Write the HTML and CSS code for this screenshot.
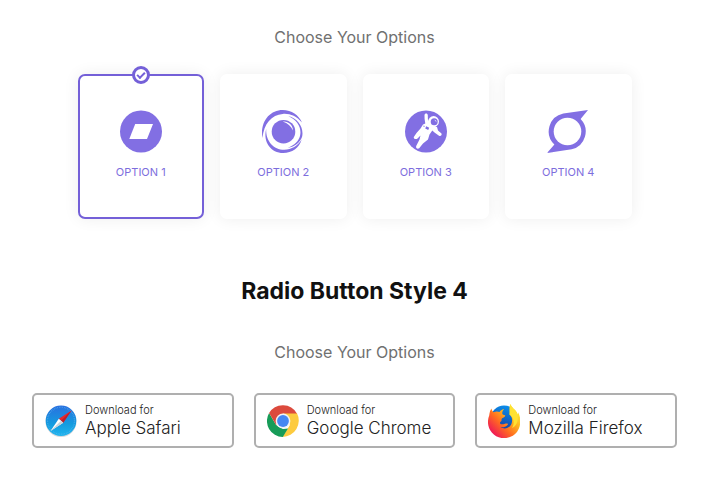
FILE: index.html
```
<!DOCTYPE html>
<html lang="en">
<head>
    <meta charset="UTF-8">
    <meta name="viewport" content="width=device-width, initial-scale=1.0">
    <title>Radio Button Styles</title>
    <link rel="stylesheet" href="styles.css">
</head>
<body>
    <section class="style-block">
        <p class="subtitle" id="cards-label">Choose Your Options</p>
        <div class="cards" role="radiogroup" aria-labelledby="cards-label">
            <label class="card">
                <input class="card-radio" type="radio" name="option" value="1" checked>
                <svg class="card-icon" viewBox="0 0 42 43" aria-hidden="true">
                    <circle cx="21" cy="21.5" r="21"/>
                    <path class="cut" d="M15.2 14H33l-6 15H9.3z"/>
                </svg>
                <span>OPTION 1</span>
            </label>
            <label class="card">
                <input class="card-radio" type="radio" name="option" value="2">
                <svg class="card-icon" viewBox="0 0 42 43" aria-hidden="true">
                    <circle cx="21.5" cy="21.7" r="11.8"/>
                    <path class="cut" d="M20.700 11.600C26.200 11 30.700 14.800 31 20.500C29 16.200 25.700 13.300 20.700 11.600z"/>
                    <path d="M.5 28C-2.300 12 7.700 0 20.700 0C29.700 0 36.700 5 40 12.600C34.200 5.800 27.700 3.300 20.700 3.900C9.700 4.800 1.800 13.500.5 28z"/>
                    <path d="M4.200 19C3.500 31 11.700 39.800 22.200 39.800C29.700 39.800 35.700 35.500 39.700 29.500C37.200 38 30 43 21.200 43C9.200 43 .7 32.500 4.200 19z"/>
                    <path d="M26.200 6C36.200 8.500 42.300 18 40 27C38 32.500 33.200 36.500 25.700 38C32.700 35 36.700 31 38 26C40 17.500 35.200 10 26.200 6z"/>
                </svg>
                <span>OPTION 2</span>
            </label>
            <label class="card">
                <input class="card-radio" type="radio" name="option" value="3">
                <svg class="card-icon" viewBox="0 0 42 43" aria-hidden="true">
                    <circle cx="21" cy="21.5" r="21"/>
                    <path class="cut" d="M19.500 5.200C19.500 3.200 22.700 3 22.800 5.200L22.900 9.500L25.500 14L32 17L33 20.500L36.500 23.500C37.200 25.500 35.500 26.500 34 25.800L29.500 22.500L27.300 20.500L24.500 24.500L23 29.500L18 33.500L14.200 38.200C12.500 39.500 10.500 38 11.200 36L14.500 29.500L15.500 25.500L12.500 28.500C10.800 29.800 8.300 28.800 8.800 27L11.500 23L15.500 18.500L18 14.500L20.300 13.500L19.600 9z"/>
                    <circle class="cut" cx="28.600" cy="11.500" r="5.400"/>
                    <circle cx="29.200" cy="11.800" r="3.500"/>
                    <path class="cut" d="M29 9.700c1.700.1 2.500 1.200 2.400 2.700c-.5-1.100-1.200-1.900-2.400-2.700z"/>
                    <path d="M21.200 16.300l3 1.500l-1 2.200l-3-1.500zM18.700 15.500l1 .5l-.4 1l-1-.5z"/>
                </svg>
                <span>OPTION 3</span>
            </label>
            <label class="card">
                <input class="card-radio" type="radio" name="option" value="4">
                <svg class="card-icon" viewBox="0 0 42 43" aria-hidden="true">
                    <path d="M41 0L33.600 9A18.200 18.200 0 0 1 24.700 39.300L0 43L7.400 34.500A18.200 18.200 0 0 1 16.300 3.500z"/>
                    <circle class="cut" cx="20.500" cy="21.500" r="13.800"/>
                </svg>
                <span>OPTION 4</span>
            </label>
        </div>
    </section>

    <section class="style-block">
        <h2>Radio Button Style 4</h2>
        <p class="subtitle" id="downloads-label">Choose Your Options</p>
        <div class="downloads" role="radiogroup" aria-labelledby="downloads-label">
            <label class="download">
                <input class="download-radio" type="radio" name="browser" value="safari">
                <svg class="download-icon" viewBox="0 0 32 34" aria-hidden="true">
                    <defs>
                        <linearGradient id="safari-blue" x1="0" y1="0" x2="0" y2="1">
                            <stop offset="0" stop-color="#2a6fe0"/>
                            <stop offset=".6" stop-color="#149bdf"/>
                            <stop offset="1" stop-color="#1fb5ee"/>
                        </linearGradient>
                    </defs>
                    <circle cx="16" cy="17.500" r="15.500" fill="#d3d7dc"/>
                    <circle cx="16" cy="16.700" r="15.300" fill="url(#safari-blue)"/>
                    <circle cx="16" cy="16.700" r="13.500" fill="none" stroke="#5fb4ee" stroke-width="1.200" stroke-dasharray=".5 1.200"/>
                    <path d="M26.500 6.500L18.200 18.700L13.800 14.800z" fill="#e9272c"/>
                    <path d="M26.500 6.500L18.200 18.700L16 16.700z" fill="#b91f2c"/>
                    <path d="M13.800 14.800L18.200 18.700L5.500 27z" fill="#fff"/>
                    <path d="M16 16.700L18.200 18.700L5.500 27z" fill="#c8d2d8"/>
                </svg>
                <span class="download-text">
                    <small>Download for</small>
                    <span>Apple Safari</span>
                </span>
            </label>
            <label class="download">
                <input class="download-radio" type="radio" name="browser" value="chrome">
                <svg class="download-icon" viewBox="0 0 32 34" aria-hidden="true">
                    <path d="M16 9H29.900A16.400 16.400 0 0 1 15.500 33L22.900 21z" fill="#fdcb3f"/>
                    <path d="M2.100 9L9.100 21L16 25L21 24.500L15.800 33A16 16 0 0 1 2.100 9z" fill="#179c58"/>
                    <path d="M2.100 9A16 16 0 0 1 29.900 9.500H16L9.100 21z" fill="#dc4a3d"/>
                    <circle cx="16" cy="17" r="7.400" fill="#f3f3f3"/>
                    <circle cx="16" cy="17" r="5.900" fill="#4587f3"/>
                </svg>
                <span class="download-text">
                    <small>Download for</small>
                    <span>Google Chrome</span>
                </span>
            </label>
            <label class="download">
                <input class="download-radio" type="radio" name="browser" value="firefox">
                <svg class="download-icon" viewBox="0 0 32 34" aria-hidden="true">
                    <defs>
                        <linearGradient id="fox-body" x1=".9" y1=".1" x2=".15" y2=".85">
                            <stop offset="0" stop-color="#fff23a"/>
                            <stop offset=".35" stop-color="#ffb41f"/>
                            <stop offset=".65" stop-color="#ff6b20"/>
                            <stop offset="1" stop-color="#f01c55"/>
                        </linearGradient>
                        <linearGradient id="fox-globe" x1=".7" y1="0" x2=".4" y2="1">
                            <stop offset="0" stop-color="#0b91ed"/>
                            <stop offset="1" stop-color="#17379a"/>
                        </linearGradient>
                    </defs>
                    <circle cx="16" cy="15" r="13.500" fill="url(#fox-globe)"/>
                    <path d="M3.500 4.500C3.800 6.500 4.500 7.500 5.500 8.200C7.500 7.200 10 7.300 11.500 8C12.500 6.300 14.500 5.200 16.200 5C14.300 6.800 14 8.800 14.500 10.300C15.500 11 17 11 17.300 11.500C17 13.500 14.500 13.800 13.700 14.700C13.300 15.500 13.900 16.300 13 17.500C11.800 18 11.500 19 12.500 20C15 21 17.500 19 19.300 19.600C20.300 20 20 20.800 19.200 21.200C17.500 23 14.500 23.600 12.500 23C16.500 26 22 24 23.600 19.500C24.800 16 24 12.500 21.500 10.500C22 8 21 3 22.500 0C23 3.800 28.700 5.800 29.600 10.500C30.200 9.700 30.200 8.800 30 8C33.500 14 33 22.500 29 28C22.500 36 10 36.300 3.800 28.500C-.7 23 -.8 16.500 1.200 11.500C1.500 9 2 6.500 3.500 4.500z" fill="url(#fox-body)"/>
                    <path d="M22.500 0C23 3.800 28.700 5.800 29.600 10.500C31 17 28 22.500 24 24C27 19.500 26 13.500 21.500 10.500C22 8 21 3 22.500 0z" fill="#ffe233"/>
                </svg>
                <span class="download-text">
                    <small>Download for</small>
                    <span>Mozilla Firefox</span>
                </span>
            </label>
        </div>
    </section>
</body>
</html>
```

FILE: styles.css
```
* {
    margin: 0;
    padding: 0;
    box-sizing: border-box;
}

body {
    background: #fff;
    font-family: Inter, "Liberation Sans", sans-serif;
    padding: 24px 33px 24px 32px;
}

.style-block {
    margin-bottom: 56px;
    text-align: center;
}

.style-block:last-child {
    margin-bottom: 0;
}

h2 {
    color: #111;
    font-size: 23px;
    line-height: 32px;
    margin-bottom: 32px;
}

.subtitle {
    color: #707070;
    font-size: 16px;
    line-height: 26px;
    margin-bottom: 24px;
}

.cards {
    display: grid;
    grid-template-columns: repeat(4, 1fr);
    gap: 16px;
    max-width: 554px;
    margin: 0 auto;
}

.card {
    position: relative;
    display: flex;
    flex-direction: column;
    align-items: center;
    gap: 8px;
    padding: 34px 8px;
    border: 2px solid transparent;
    border-radius: 7px;
    box-shadow: 0 0 16px rgba(0, 0, 0, 0.07);
    color: #7d6ddd;
    font-size: 11px;
    line-height: 22px;
    cursor: pointer;
}

.card:has(:checked) {
    border-color: #7460d8;
}

/* the radio itself is the badge on the top edge */
.card-radio {
    appearance: none;
    position: absolute;
    top: -10px;
    left: calc(50% - 9px);
    width: 18px;
    height: 18px;
    border: 3px solid #7460d8;
    border-radius: 50%;
    background: #fff;
    opacity: 0;
}

.card-radio:checked {
    opacity: 1;
}

.card-radio::after {
    content: "";
    position: absolute;
    top: 3px;
    left: 2px;
    width: 8px;
    height: 5px;
    border-left: 2px solid #7460d8;
    border-bottom: 2px solid #7460d8;
    box-sizing: border-box;
    transform: rotate(-45deg);
}

.card-icon {
    width: 42px;
    height: 43px;
    fill: #826fe3;
}

.card-icon .cut {
    fill: #fff;
}

.downloads {
    display: grid;
    grid-template-columns: repeat(3, 1fr);
    gap: 20px;
    margin-top: 28px;
}

.download {
    position: relative;
    display: flex;
    align-items: center;
    gap: 8px;
    padding: 8px 11px;
    border: 2px solid #afafaf;
    border-radius: 5px;
    color: #222;
    text-align: left;
    cursor: pointer;
}

.download:has(:checked) {
    border-color: #7460d8;
}

.download-radio {
    appearance: none;
    position: absolute;
    opacity: 0;
}

.download-icon {
    flex: none;
    width: 32px;
    height: 34px;
}

.download-text {
    display: flex;
    flex-direction: column;
    font-size: 17px;
    font-weight: 300;
    line-height: 20px;
    white-space: nowrap;
}

.download-text small {
    font-size: 11px;
    line-height: 15px;
}
```
